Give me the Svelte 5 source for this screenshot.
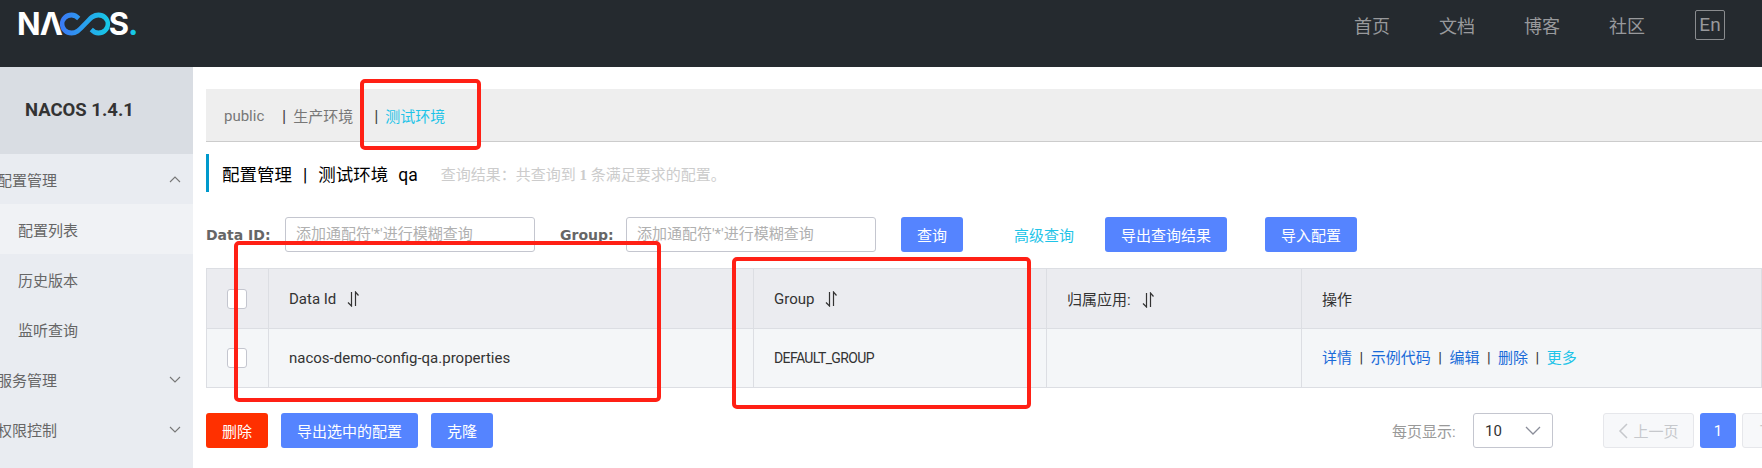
<script lang="ts">
  const navLinks = ["首页", "文档", "博客", "社区"];
  const menu = [
    { label: "配置管理", open: true, children: ["配置列表", "历史版本", "监听查询"] },
    { label: "服务管理", open: false, children: [] },
    { label: "权限控制", open: false, children: [] },
  ];
  const rowLinks = ["详情", "示例代码", "编辑", "删除"];
</script>

{#snippet sortIcon()}
  <svg class="sort" width="13" height="16" viewBox="0 0 13 16" fill="none" stroke="currentColor" stroke-width="1.2">
    <path d="M4.5 1v14L1 11.5" />
    <path d="M8.5 15V1l3 3.5" />
  </svg>
{/snippet}

<div class="page">
  <header class="topbar">
    <div class="logo" aria-label="NACOS">
      <span>NΛ</span>
      <svg class="loop" width="52" height="24" viewBox="0 0 58 24" preserveAspectRatio="none" fill="none" stroke-width="5">
        <defs>
          <linearGradient id="lg" x1="0" x2="1" y1="0" y2="0">
            <stop offset="0" stop-color="#3a7bf5" />
            <stop offset="1" stop-color="#17c7e6" />
          </linearGradient>
        </defs>
        <path d="M22 6.500C19.500 4 17 3 14 3 8 3 3.500 7 3.500 12s4.500 9 10.500 9c6 0 9-3.500 15-9s9-9 15-9 10.500 4 10.500 9-4.500 9-10.500 9c-3 0-5.500-1-8-3.500" stroke="url(#lg)" />
      </svg>
      <span>S</span><span class="dot">.</span>
    </div>
    <nav class="nav">
      {#each navLinks as link}
        <span class="nav-link">{link}</span>
      {/each}
      <span class="lang">En</span>
    </nav>
  </header>

  <div class="body">
    <aside class="sidebar">
      <div class="brand">NACOS 1.4.1</div>
      {#each menu as item}
        <div class="menu-item">
          <span class="menu-label">{item.label}</span>
          <svg class="chev" class:up={item.open} width="12" height="7" viewBox="0 0 12 7" fill="none" stroke="currentColor" stroke-width="1.1">
            <path d="M1 1l5 5 5-5" />
          </svg>
        </div>
        {#each item.children as child, i}
          <div class="sub-item" class:active={i === 0}>{child}</div>
        {/each}
      {/each}
    </aside>

    <main class="main">
      <div class="tabs">
        <span class="tab first">public</span>
        <span class="tab"><i>|</i>生产环境</span>
        <span class="tab current"><i>|</i><b>测试环境</b></span>
      </div>

      <div class="title">
        <span class="title-text">配置管理<em>|</em>测试环境<u>qa</u></span>
        <span class="result">查询结果：共查询到 <strong>1</strong> 条满足要求的配置。</span>
      </div>

      <div class="search">
        <span class="field-label first-label">Data ID:</span>
        <div class="input">添加通配符'*'进行模糊查询</div>
        <span class="field-label group-label">Group:</span>
        <div class="input">添加通配符'*'进行模糊查询</div>
        <button class="btn query">查询</button>
        <span class="advanced">高级查询</span>
        <button class="btn export">导出查询结果</button>
        <button class="btn import">导入配置</button>
      </div>

      <table class="table">
        <colgroup>
          <col style="width:62px" />
          <col style="width:485px" />
          <col style="width:293px" />
          <col style="width:255px" />
          <col />
        </colgroup>
        <thead>
          <tr>
            <th class="check"><span class="box"></span></th>
            <th>Data Id{@render sortIcon()}</th>
            <th>Group{@render sortIcon()}</th>
            <th>归属应用:{@render sortIcon()}</th>
            <th>操作</th>
          </tr>
        </thead>
        <tbody>
          <tr>
            <td class="check"><span class="box"></span></td>
            <td>nacos-demo-config-qa.properties</td>
            <td class="group-name">DEFAULT_GROUP</td>
            <td></td>
            <td class="ops">{#each rowLinks as link}<span class="op">{link}</span><span class="sep">|</span>{/each}<span class="more">更多</span></td>
          </tr>
        </tbody>
      </table>

      <div class="footer">
        <button class="btn danger">删除</button>
        <button class="btn export-selected">导出选中的配置</button>
        <button class="btn clone">克隆</button>
        <div class="pager">
          <span class="per-page">每页显示:</span>
          <div class="select">
            <span>10</span>
            <svg width="16" height="9" viewBox="0 0 16 9" fill="none" stroke="#8a8d99" stroke-width="1.3"><path d="M1 1l7 7 7-7" /></svg>
          </div>
          <div class="page-btn prev">
            <svg width="10" height="16" viewBox="0 0 10 16" fill="none" stroke="#c6c8cc" stroke-width="1.5"><path d="M9 1L2 8l7 7" /></svg>
            上一页
          </div>
          <div class="page-btn now">1</div>
          <div class="page-btn next">下一页</div>
        </div>
      </div>
    </main>
  </div>

  <div class="mark mark-tab"></div>
  <div class="mark mark-id"></div>
  <div class="mark mark-group"></div>
</div>

<style>
  :global(body) {
    margin: 0;
    background: #fff;
  }
  .page {
    position: relative;
    width: 1762px;
    height: 468px;
    overflow: hidden;
    font-family: Roboto, "Noto Sans CJK SC", sans-serif;
    font-size: 15px;
    color: #333;
  }
  .topbar {
    height: 67px;
    background: #252a2f;
    display: flex;
    justify-content: space-between;
    align-items: flex-start;
  }
  .logo {
    display: flex;
    align-items: center;
    height: 24px;
    margin: 12px 0 0 17px;
    color: #fff;
    font-family: Inter, sans-serif;
    font-size: 31px;
    font-weight: 700;
    line-height: 24px;
    letter-spacing: -1px;
  }
  .loop {
    margin: 0 -2px 0 -3px;
    flex: none;
  }
  .dot {
    color: #17c7e6;
  }
  .nav {
    display: flex;
    align-items: center;
    margin: 10px 37px 0 0;
    color: #98999c;
    font-size: 18px;
  }
  .nav-link {
    margin-right: 49px;
  }
  .lang {
    width: 28px;
    height: 28px;
    margin-left: 1px;
    border: 1px solid #8a8c8f;
    border-radius: 2px;
    text-align: center;
    line-height: 27px;
    font-size: 19px;
  }
  .body {
    display: flex;
    height: 401px;
  }
  .sidebar {
    width: 193px;
    flex: none;
    background: #e9ecf1;
    overflow: hidden;
    color: #666;
    font-size: 15px;
  }
  .brand {
    height: 87px;
    background: #d9dde3;
    color: #333;
    font-size: 18.500px;
    font-weight: 700;
    line-height: 87px;
    padding-left: 25px;
  }
  .menu-item {
    height: 50px;
    display: flex;
    align-items: center;
    justify-content: space-between;
    padding-right: 12px;
  }
  .menu-label {
    margin-left: -3px;
  }
  .chev {
    color: #777;
  }
  .chev.up {
    transform: rotate(180deg);
  }
  .sub-item {
    height: 50px;
    line-height: 54px;
    padding-left: 18px;
  }
  .sub-item.active {
    background: #f0f2f5;
  }
  .main {
    flex: 1;
    min-width: 0;
    padding: 22px 0 0 13px;
  }
  .tabs {
    height: 51px;
    padding: 1px 0 0 18px;
    background: #eee;
    border-bottom: 1px solid #ccc;
    display: flex;
    align-items: center;
    color: #777;
    font-size: 15px;
  }
  .tab {
    display: inline-flex;
    align-items: center;
  }
  .tab.first {
    width: 58px;
  }
  .tab.current {
    margin-left: 21px;
  }
  .tab i {
    font-style: normal;
    color: #444;
    font-size: 17px;
    margin-right: 7px;
  }
  .tab b {
    font-weight: 400;
    color: #1fc4e8;
  }
  .title {
    display: flex;
    align-items: center;
    height: 38px;
    margin-top: 12px;
    padding-left: 13px;
    border-left: 3px solid #09c;
  }
  .title-text {
    font-size: 17.500px;
    color: #000;
  }
  .title-text em {
    font-style: normal;
    margin: 0 11px;
  }
  .title-text u {
    text-decoration: none;
    margin-left: 10px;
  }
  .result {
    margin-left: 23px;
    color: #ccc;
    font-size: 15px;
  }
  .result strong {
    font-family: "Liberation Serif", serif;
  }
  .search {
    display: flex;
    align-items: center;
    height: 35px;
    margin-top: 25px;
  }
  .field-label {
    font-family: "DejaVu Sans", "Noto Sans CJK SC", sans-serif;
    font-size: 14px;
    font-weight: 700;
    color: #666;
  }
  .first-label {
    width: 79px;
    flex: none;
  }
  .group-label {
    width: 66px;
    flex: none;
    margin-left: 25px;
  }
  .input {
    width: 250px;
    height: 35px;
    flex: none;
    box-sizing: border-box;
    padding-left: 10px;
    border: 1px solid #c4c6cf;
    border-radius: 3px;
    color: #b0b0b0;
    line-height: 33px;
  }
  .btn {
    height: 35px;
    flex: none;
    padding: 0;
    border: 0;
    border-radius: 3px;
    background: #5584ff;
    color: #fff;
    font: inherit;
  }
  .query {
    width: 62px;
    margin-left: 25px;
  }
  .advanced {
    margin-left: 51px;
    color: #1fc4e8;
  }
  .export {
    width: 122px;
    margin-left: 31px;
  }
  .import {
    width: 92px;
    margin-left: 38px;
  }
  .table {
    width: 1556px;
    margin-top: 16px;
    border-collapse: collapse;
    table-layout: fixed;
  }
  th,
  td {
    border: 1px solid #dcdee3;
    padding: 0 0 0 20px;
    text-align: left;
    font-weight: 400;
    color: #333;
  }
  th {
    height: 59px;
    background: #ebecf0;
  }
  td {
    height: 58px;
    background: #f4f6f8;
  }
  .check {
    padding: 0 0 0 20px;
  }
  .box {
    display: block;
    width: 18px;
    height: 18px;
    border: 1px solid #c4c6cf;
    border-radius: 3px;
    background: #fff;
  }
  .sort {
    margin-left: 11px;
    vertical-align: -3px;
  }
  .group-name {
    font-size: 14px;
    letter-spacing: -0.6px;
  }
  .ops {
    height: 54px;
    padding-bottom: 4px;
  }
  .op {
    color: #1a6bd8;
  }
  .sep {
    margin: 0 7.500px;
  }
  .more {
    color: #1fc4e8;
  }
  .footer {
    display: flex;
    align-items: center;
    margin-top: 25px;
  }
  .danger {
    width: 62px;
    background: #ff3000;
  }
  .export-selected {
    width: 137px;
    margin-left: 13px;
  }
  .clone {
    width: 62px;
    margin-left: 13px;
  }
  .pager {
    display: flex;
    align-items: center;
    margin-left: 899px;
    flex: none;
  }
  .per-page {
    width: 81px;
    color: #999;
    white-space: nowrap;
  }
  .select {
    width: 80px;
    height: 35px;
    box-sizing: border-box;
    display: flex;
    align-items: center;
    justify-content: space-between;
    padding: 0 11px;
    border: 1px solid #c4c6cf;
    border-radius: 3px;
    font-size: 15px;
  }
  .page-btn {
    height: 35px;
    box-sizing: border-box;
    display: flex;
    align-items: center;
    justify-content: center;
    border-radius: 3px;
  }
  .prev,
  .next {
    border: 1px solid #e6e7eb;
    background: #f7f8fa;
    color: #c6c8cc;
  }
  .prev {
    width: 91px;
    gap: 5px;
    margin-left: 50px;
  }
  .now {
    width: 36px;
    margin-left: 6px;
    background: #5584ff;
    color: #fff;
  }
  .next {
    width: 80px;
    flex: none;
    margin-left: 6px;
  }
  .mark {
    position: absolute;
    box-sizing: border-box;
    border: 4px solid #ff2015;
    border-radius: 5px;
  }
  .mark-tab {
    left: 360px;
    top: 79px;
    width: 121px;
    height: 71px;
  }
  .mark-id {
    left: 234px;
    top: 241px;
    width: 427px;
    height: 161px;
  }
  .mark-group {
    left: 732px;
    top: 257px;
    width: 299px;
    height: 152px;
  }
</style>
